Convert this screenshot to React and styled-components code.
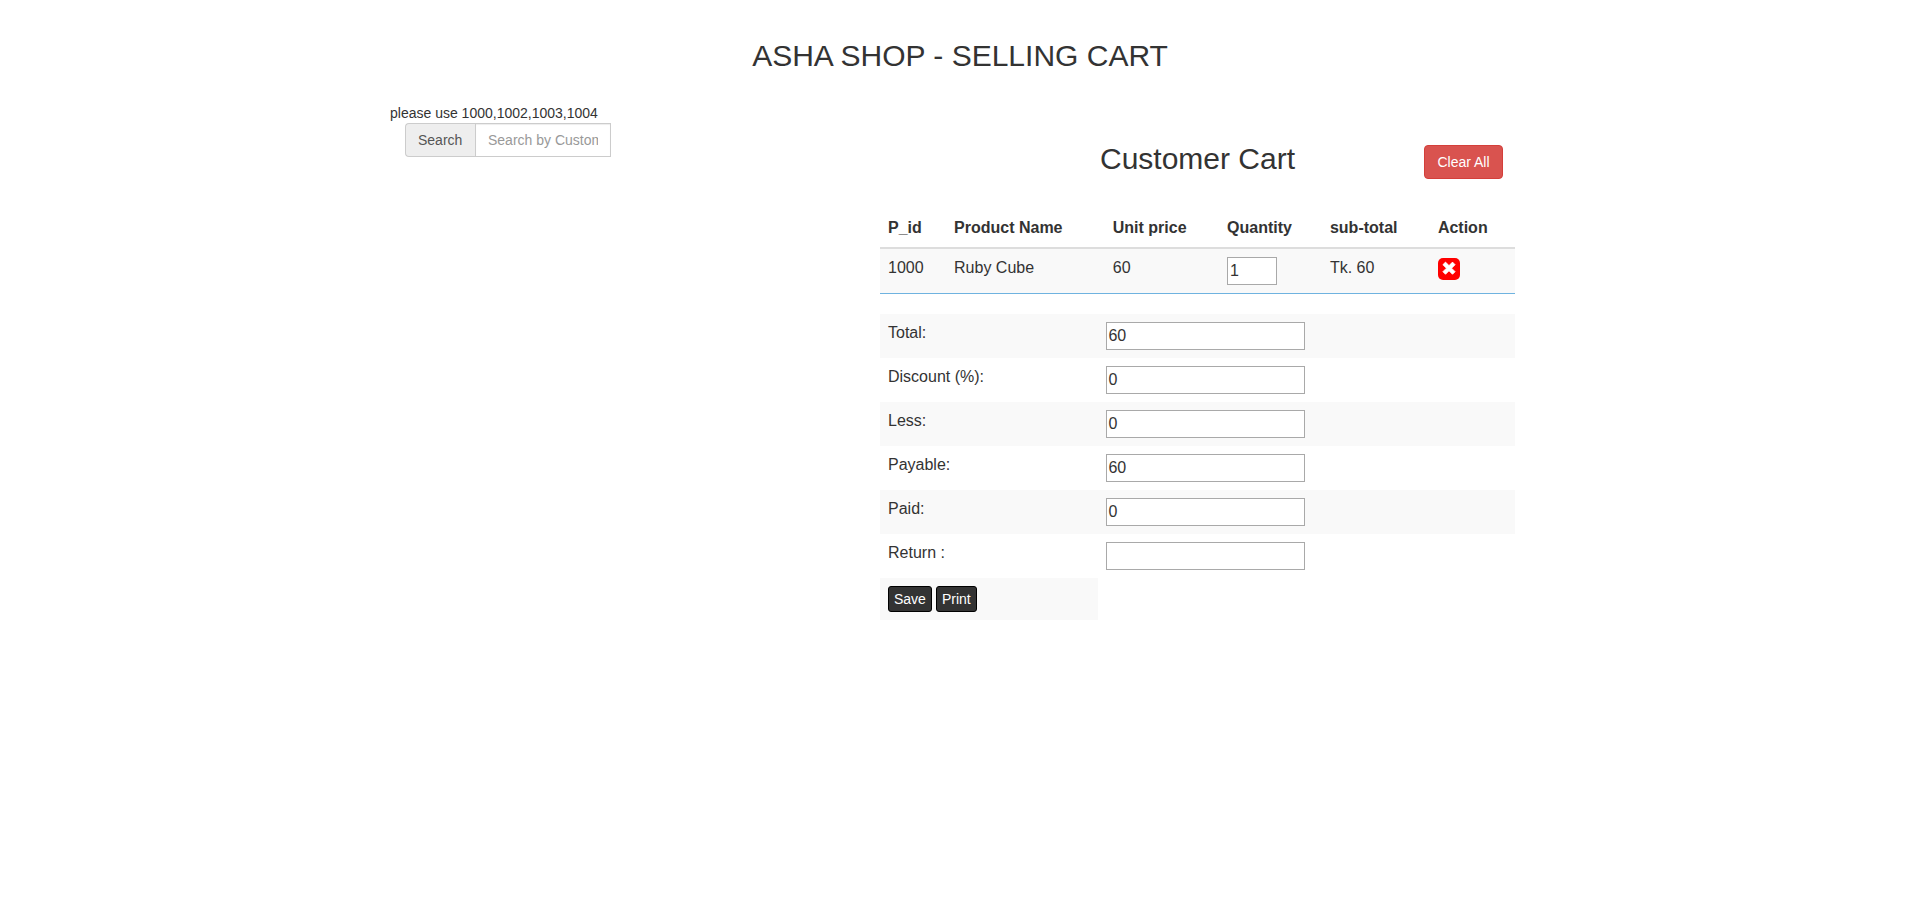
import React, { useState } from "react";
import styled, { createGlobalStyle } from "styled-components";

const GlobalStyle = createGlobalStyle`
  *, *::before, *::after { box-sizing: border-box; }
  body {
    margin: 0;
    background: #fff;
    color: #333;
    font-family: "Liberation Sans", Arial, sans-serif;
    font-size: 14px;
    line-height: 20px;
  }
  button, input { font-family: inherit; }
`;

const Page = styled.main`
  max-width: 1170px;
  margin: 0 auto;
  padding: 39px 15px;
`;

const Title = styled.h1`
  margin: 0;
  font-size: 30px;
  font-weight: 500;
  line-height: 33px;
  text-align: center;
`;

const Columns = styled.div`
  display: grid;
  grid-template-columns: 475fr 635fr;
  column-gap: 15px;
  padding-right: 15px;
  margin-top: 31px;
`;

const Hint = styled.p`
  margin: 0;
`;

const SearchGroup = styled.div`
  display: flex;
  width: 206px;
  height: 34px;
  margin-left: 15px;
`;

const SearchLabel = styled.label`
  min-width: 70px;
  padding: 6px 12px;
  border: 1px solid #ccc;
  border-right: 0;
  border-radius: 4px 0 0 4px;
  background: #eee;
  color: #555;
`;

const SearchInput = styled.input`
  flex: 1;
  min-width: 0;
  padding: 6px 12px;
  border: 1px solid #ccc;
  background: #fff;
  color: #555;
  font-size: 14px;
  box-shadow: inset 0 1px 1px rgba(0, 0, 0, 0.075);
  &::placeholder { color: #999; opacity: 1; }
`;

const Cart = styled.section`
  padding-top: 38px;
`;

const CartHeader = styled.header`
  display: grid;
  grid-template-columns: 1fr auto 1fr;
  align-items: start;
  padding: 0 12px;
  margin-bottom: 29px;
`;

const CartTitle = styled.h2`
  grid-column: 2;
  margin: 0;
  font-size: 30px;
  font-weight: 500;
  line-height: 36px;
`;

const ClearButton = styled.button`
  justify-self: end;
  min-width: 79px;
  margin-top: 4px;
  padding: 6px 12px;
  border: 1px solid #d43f3a;
  border-radius: 4px;
  background: #d9534f;
  color: #fff;
  font-size: 14px;
  line-height: 20px;
  cursor: pointer;
`;

const Table = styled.table`
  width: 100%;
  margin-bottom: 20px;
  border-collapse: separate;
  border-spacing: 0;
  table-layout: fixed;
  font-size: 16px;
  line-height: 22px;
`;

const Col = styled.col`
  width: ${(p) => p.$share}%;
`;

const HeadCell = styled.th`
  height: 41px;
  padding: 8px;
  border-bottom: 2px solid #ddd;
  text-align: left;
  font-weight: 700;
`;

const Cell = styled.td`
  height: ${(p) => (p.$short ? 42 : 44)}px;
  padding: 8px;
  vertical-align: top;
  background: ${(p) => (p.$striped ? "#f9f9f9" : "transparent")};
`;

const ItemCell = styled(Cell)`
  height: 45px;
  border-bottom: 1px solid #6fb3e0;
`;

const Field = styled.input`
  display: block;
  width: ${(p) => p.$width};
  height: 28px;
  padding: 1px;
  border: 1px solid #a9a9a9;
  background: #fff;
  color: #333;
  font-size: 16px;
`;

const QuantityField = styled(Field)`
  padding: 1px 2px;
`;

const RemoveButton = styled.button`
  display: block;
  width: 22px;
  height: 22px;
  margin-top: 1px;
  padding: 0;
  border: 0;
  border-radius: 5px;
  background: #f00;
  cursor: pointer;
  svg { display: block; }
`;

const Actions = styled.div`
  display: flex;
  gap: 4px;
`;

const DarkButton = styled.button`
  height: 26px;
  padding: 0 5px;
  border: 1px solid #000;
  border-radius: 3px;
  background: #333;
  color: #fff;
  font-size: 14px;
  line-height: 20px;
  cursor: pointer;
`;

const itemColumns = [
  { name: "P_id", share: 10.4 },
  { name: "Product Name", share: 25 },
  { name: "Unit price", share: 18 },
  { name: "Quantity", share: 16.2 },
  { name: "sub-total", share: 17 },
  { name: "Action", share: 13.4 },
];

const summary = [
  { id: "total", label: "Total:", value: "60" },
  { id: "discount", label: "Discount (%):", value: "0" },
  { id: "less", label: "Less:", value: "0" },
  { id: "payable", label: "Payable:", value: "60" },
  { id: "paid", label: "Paid:", value: "0" },
  { id: "return", label: "Return :", value: "" },
];

function CrossIcon() {
  return (
    <svg width="22" height="22" viewBox="0 0 22 22" aria-hidden="true">
      <path
        d="M4.9 6.7 7.5 4.1 11 7.6 14.5 4.1 17.1 6.7 13.6 10.2 17.1 13.7 14.5 16.3 11 12.8 7.5 16.3 4.9 13.7 8.4 10.2Z"
        fill="#fff"
        stroke="#fff"
        strokeWidth="0.8"
        strokeLinejoin="round"
      />
    </svg>
  );
}

export default function App() {
  const [quantity, setQuantity] = useState("1");

  return (
    <Page>
      <GlobalStyle />
      <Title>ASHA SHOP - SELLING CART</Title>
      <Columns>
        <section>
          <Hint>please use 1000,1002,1003,1004</Hint>
          <SearchGroup>
            <SearchLabel htmlFor="search">Search</SearchLabel>
            <SearchInput id="search" type="text" placeholder="Search by Customer" />
          </SearchGroup>
        </section>
        <Cart>
          <CartHeader>
            <CartTitle>Customer Cart</CartTitle>
            <ClearButton type="button">Clear All</ClearButton>
          </CartHeader>
          <Table>
            <colgroup>
              {itemColumns.map((c) => (
                <Col key={c.name} $share={c.share} />
              ))}
            </colgroup>
            <thead>
              <tr>
                {itemColumns.map((c) => (
                  <HeadCell key={c.name} scope="col">{c.name}</HeadCell>
                ))}
              </tr>
            </thead>
            <tbody>
              <tr>
                <ItemCell $striped>1000</ItemCell>
                <ItemCell $striped>Ruby Cube</ItemCell>
                <ItemCell $striped>60</ItemCell>
                <ItemCell $striped>
                  <QuantityField
                    $width="50px"
                    type="text"
                    aria-label="Quantity"
                    value={quantity}
                    onChange={(e) => setQuantity(e.target.value)}
                  />
                </ItemCell>
                <ItemCell $striped>Tk. 60</ItemCell>
                <ItemCell $striped>
                  <RemoveButton type="button" aria-label="Remove">
                    <CrossIcon />
                  </RemoveButton>
                </ItemCell>
              </tr>
            </tbody>
          </Table>
          <Table>
            <colgroup>
              <Col $share={34.4} />
              <Col $share={65.6} />
            </colgroup>
            <tbody>
              {summary.map((row, i) => (
                <tr key={row.id}>
                  <Cell $striped={i % 2 === 0}>
                    <label htmlFor={row.id}>{row.label}</label>
                  </Cell>
                  <Cell $striped={i % 2 === 0}>
                    <Field $width="199px" id={row.id} type="text" defaultValue={row.value} />
                  </Cell>
                </tr>
              ))}
              <tr>
                <Cell $striped $short>
                  <Actions>
                    <DarkButton type="button">Save</DarkButton>
                    <DarkButton type="button">Print</DarkButton>
                  </Actions>
                </Cell>
              </tr>
            </tbody>
          </Table>
        </Cart>
      </Columns>
    </Page>
  );
}
